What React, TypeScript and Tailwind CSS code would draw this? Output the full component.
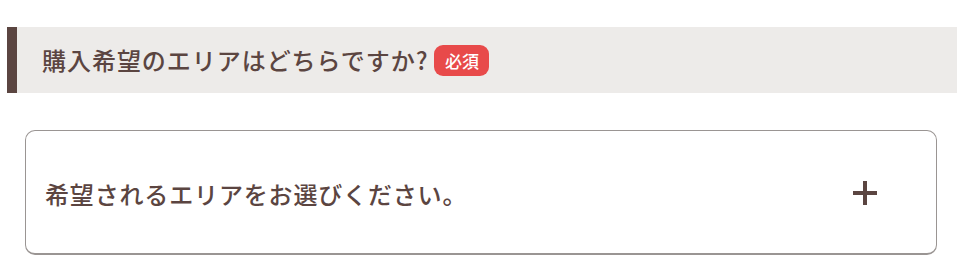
import React from "react";

export default function App() {
  const font = { fontFamily: '"Noto Sans CJK JP", "Noto Sans", sans-serif' };
  return (
    <div className="w-[979px] h-[279px] bg-white pt-[27px] pl-[7px] pr-[22px]" style={font}>
      <div className="h-[66px] bg-[#edebe9] border-l-[10px] border-[#5b4541] flex items-center pl-[25px]">
        <span className="text-[24px] font-medium text-[#5b4541] tracking-[0.04em] leading-none">
          購入希望のエリアはどちらですか?
        </span>
        <span className="ml-[6px] inline-flex items-center justify-center w-[55px] h-[31px] rounded-[9px] bg-[#e84a4a] text-white text-[17px] font-medium leading-none">
          必須
        </span>
      </div>
      <div className="mt-[37px] ml-[18px] mr-[20px] h-[125px] rounded-[10px] border border-[#9a9593] border-b-2 flex items-center pl-[19px] pr-[59px] justify-between">
        <span className="text-[24px] font-medium text-[#5b4541] tracking-[0.035em] leading-none mt-[4px]">
          希望されるエリアをお選びください。
        </span>
        <svg width="24" height="24" viewBox="0 0 24 24" className="mt-[2px]">
          <rect x="10" y="0" width="4" height="24" fill="#5b4541" />
          <rect x="0" y="10" width="24" height="4" fill="#5b4541" />
        </svg>
      </div>
    </div>
  );
}
